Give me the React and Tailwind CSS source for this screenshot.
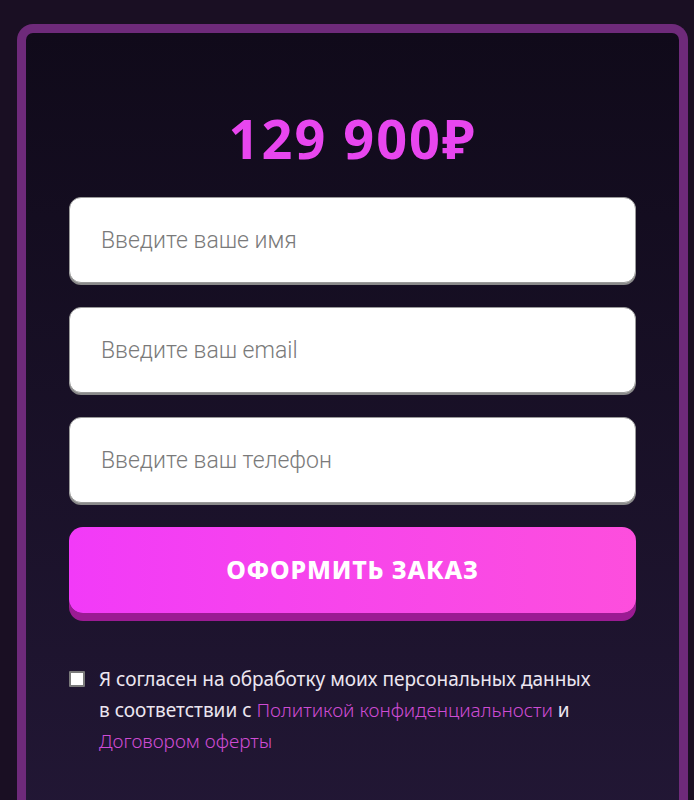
import React, { useState } from "react";

const fields = [
  { type: "text", placeholder: "Введите ваше имя" },
  { type: "email", placeholder: "Введите ваш email" },
  { type: "tel", placeholder: "Введите ваш телефон" },
];

const OrderForm = () => {
  const [agreed, setAgreed] = useState(false);

  return (
    <div
      className="min-h-[800px] bg-[#1a0f23] pt-6 pl-[17px] pr-[6px] overflow-hidden"
      style={{ fontFamily: "'Noto Sans', 'Liberation Sans', sans-serif" }}
    >
      <div className="h-[800px] rounded-[16px] border-[9px] border-b-0 border-[#6e2a7a] bg-gradient-to-b from-[#100a1a] to-[#221735] px-[43px] pt-[75px]">
        {/* Price */}
        <h2 className="text-center text-[54px] leading-[60px] font-bold text-[#e846ef] tracking-[2px]">
          129 900₽
        </h2>

        {/* Inputs */}
        <div className="mt-[29px] flex flex-col gap-[24px]">
          {fields.map((f) => (
            <input
              key={f.placeholder}
              type={f.type}
              placeholder={f.placeholder}
              className="h-[86px] w-full rounded-[12px] bg-white border border-[#9a9a9a] shadow-[0_2px_0_#8a8a8a] px-[31px] text-[23px] font-light text-[#333] placeholder:text-[#7a7a7a] outline-none"
              style={{ fontFamily: "Roboto, 'Liberation Sans', sans-serif" }}
            />
          ))}
        </div>

        {/* Submit */}
        <button className="mt-[24px] h-[86px] w-full rounded-[14px] bg-gradient-to-r from-[#f23af8] to-[#fd4edd] shadow-[0_8px_0_#9b1b93] text-white text-[25px] font-extrabold tracking-[0.8px] uppercase">
          Оформить заказ
        </button>

        {/* Agreement */}
        <label className="mt-[51px] flex items-start gap-[14px] cursor-pointer">
          <input
            type="checkbox"
            checked={agreed}
            onChange={() => setAgreed(!agreed)}
            className="mt-[7px] h-[16px] w-[16px] shrink-0 appearance-none bg-white border-2 border-[#7a7a7a] rounded-[1px]"
          />
          <span className="text-[19px] leading-[31px] text-[#ece6f0]">
            Я согласен на обработку моих персональных данных
            <br />в соответствии с{" "}
            <a href="#" className="text-[#cf4cd4] font-light">
              Политикой конфиденциальности
            </a>{" "}
            и{" "}
            <br />
            <a href="#" className="text-[#cf4cd4] font-light">
              Договором оферты
            </a>
          </span>
        </label>
      </div>
    </div>
  );
};

export default function App() {
  return <OrderForm />;
}
